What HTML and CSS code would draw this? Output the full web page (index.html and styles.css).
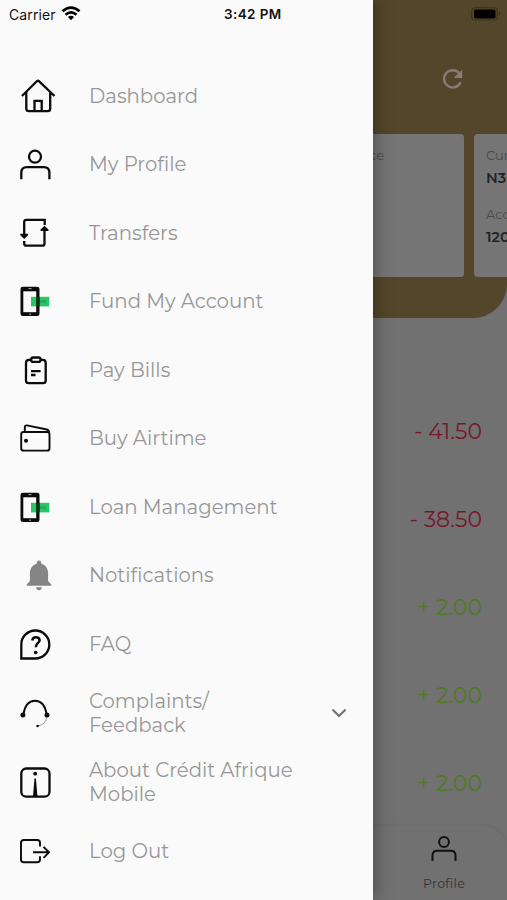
FILE: index.html
```html
<!DOCTYPE html>
<html lang="en">
<head>
<meta charset="utf-8">
<title>Mobile banking</title>
<link rel="stylesheet" href="styles.css">
</head>
<body>
<div class="screen">
  <main class="app">
    <header class="hero">
      <div class="toolbar">
        <svg class="refresh" width="24" height="24" viewBox="0 0 24 24"><path d="M19.6 15.200A8.600 8.600 0 1 1 18.400 6.400" fill="none" stroke="currentColor" stroke-width="2.400"/><path d="M21.200 2.500v8.500h-8.500z" fill="currentColor"/></svg>
      </div>
      <div class="cards">
        <section class="card card-main"><span class="label">Balance</span></section>
        <section class="card card-next">
          <span class="label">Cur</span><strong>N3</strong>
          <span class="label second">Acc</span><strong>120</strong>
        </section>
      </div>
    </header>
    <ul class="amounts">
      <li class="debit">- 41.50</li>
      <li class="debit">- 38.50</li>
      <li>+ 2.00</li>
      <li>+ 2.00</li>
      <li>+ 2.00</li>
    </ul>
    <nav class="tabs">
      <a class="tab">
        <svg width="28" height="28" viewBox="0 0 28 28" fill="none" stroke="#111" stroke-width="2"><circle cx="14" cy="7" r="4.900"/><path d="M2.500 26v-5.500q0-4.700 4.700-4.700h13.600q4.700 0 4.700 4.700V26"/></svg>
        <span>Profile</span>
      </a>
    </nav>
  </main>

  <aside class="drawer">
    <a class="item"><svg class="ic" viewBox="0 0 40 36"><path d="M4 18 18.800 3.300q1.200-1.100 2.400 0L36.500 18M8.300 14.500v16q0 2.700 2.700 2.700h18.500q2.700 0 2.700-2.700v-16M16.500 33V22.800h7.200V33"/></svg><span>Dashboard</span></a>
    <a class="item"><svg class="ic" viewBox="0 0 40 36"><circle cx="17" cy="10.700" r="6"/><path d="M3.300 33.200v-6.500q0-5.600 5.600-5.600h16.900q5.600 0 5.600 5.600v6.500"/></svg><span>My Profile</span></a>
    <a class="item"><svg class="ic" viewBox="0 0 40 36"><path d="M6.200 20V7q0-2.200 2.200-2.200h18.300V10M6.200 26v2.500q0 2.200 2.200 2.200h15.900q2.200 0 2.200-2.200V15"/><path class="solid" d="M2.400 18.800h7.600q.6.900-.2 1.700L6.200 24l-3.600-3.500q-.8-.8-.2-1.700zM22.700 16h7.700q.6-.9-.2-1.700l-3.700-3.500-3.700 3.500q-.7.800-.1 1.700z"/></svg><span>Transfers</span></a>
    <a class="item"><svg class="ic" viewBox="0 0 40 36"><path class="note" d="M13 13.800h18.300v9.600H13z"/><path class="noteline" d="M20 18.600h8"/><rect class="solid" x="2.500" y="3.700" width="19" height="29.300" rx="2.300"/><rect class="glass" x="5.300" y="8.300" width="12.900" height="20.900"/><path class="note" d="M13 13.800h5.200v9.600H13z"/><path class="shade" d="M18.200 13.800h3.300v9.600h-3.300z"/><path class="slot" d="M10.500 5.600h3M11 31.200h2"/></svg><span>Fund My Account</span></a>
    <a class="item"><svg class="ic" viewBox="0 0 40 36"><path d="M13 7.800h-2q-3 0-3 3v17.600q0 2.700 2.700 2.700H25q2.700 0 2.700-2.700V10.800q0-3-3-3h-2M13 19.200h9.600M13 23h4.500"/><rect x="13.200" y="5.500" width="9.300" height="4.400" rx="2"/></svg><span>Pay Bills</span></a>
    <a class="item"><svg class="ic mid" viewBox="0 0 40 36"><rect x="3.200" y="12" width="28.300" height="18.600" rx="2.400"/><path d="M6.800 11.700V7.200q.1-2.100 2.100-1.800l20 4.100q2 .4 2.200 3"/><circle class="solid" cx="8" cy="20.800" r="2"/></svg><span>Buy Airtime</span></a>
    <a class="item"><svg class="ic" viewBox="0 0 40 36"><path class="note" d="M13 13.800h18.300v9.600H13z"/><path class="noteline" d="M20 18.600h8"/><rect class="solid" x="2.500" y="3.700" width="19" height="29.300" rx="2.300"/><rect class="glass" x="5.300" y="8.300" width="12.900" height="20.900"/><path class="note" d="M13 13.800h5.200v9.600H13z"/><path class="shade" d="M18.200 13.800h3.300v9.600h-3.300z"/><path class="slot" d="M10.500 5.600h3M11 31.200h2"/></svg><span>Loan Management</span></a>
    <a class="item"><svg class="ic" viewBox="0 0 40 36"><path class="bell" d="M21 3.500c1.400 0 2.300 1 2.300 2.400v.8c4.300 1.200 6.800 5 6.800 9.300V24l3.200 3.400v1.400H8.700v-1.400L11.900 24v-8c0-4.300 2.500-8.100 6.800-9.300v-.8c0-1.400.9-2.400 2.300-2.400zM18 30.300h6q-.6 3-3 3t-3-3z"/></svg><span>Notifications</span></a>
    <a class="item"><svg class="ic" viewBox="0 0 40 36"><path d="M3.300 32.500V18.600a14 14 0 1 1 14 13.900z"/><path class="query" d="M14.300 14.500q.4-3.300 3.700-3.300t3.600 3q0 1.700-1.900 3.100-1.800 1.300-1.800 4"/><circle class="solid" cx="17.700" cy="26.500" r="1.800"/></svg><span>FAQ</span></a>
    <a class="item tall"><svg class="ic mid" viewBox="0 0 40 36"><path d="M5.500 19C7 10 10.500 5.700 17 5.700S27 10 28.600 19"/><path class="hair" d="M29 20.500q-.5 9-9 10.500"/><circle class="solid" cx="4.900" cy="20" r="2.500"/><circle class="solid" cx="29" cy="20" r="2.500"/><circle class="solid" cx="19.600" cy="31" r="1.300"/></svg><span>Complaints/<br>Feedback</span><svg class="chevron" width="16" height="10" viewBox="0 0 16 10"><path d="M1.500 1.500l6.500 6.500 6.500-6.500" fill="none" stroke="#737373" stroke-width="2.200"/></svg></a>
    <a class="item tall"><svg class="ic" viewBox="0 0 40 36"><rect x="3.300" y="4.500" width="28.200" height="28.200" rx="5"/><circle class="solid" cx="17.200" cy="9.700" r="1.900"/><path class="solid" d="M16.500 14.500h1.400l1.500 17.500h-4.400z"/></svg><span>About Crédit Afrique<br>Mobile</span></a>
    <a class="item"><svg class="ic mid" viewBox="0 0 40 36"><path d="M22 13.500v-3.700q0-2.800-2.800-2.800H5.800Q3 7 3 9.800v16.700q0 2.800 2.800 2.800h13.400q2.800 0 2.800-2.800v-3.300M15 19.300h15.500M25.500 13.800l5.500 5.500-5.500 5.500"/></svg><span>Log Out</span></a>
  </aside>

  <div class="status">
    <span class="carrier">Carrier</span>
    <svg class="wifi" width="20" height="15" viewBox="0 0 20 15"><path d="M1.500 5.300q8.500-7.200 17 0M4.500 8.700q5.500-4.500 11 0" fill="none" stroke="#000" stroke-width="2.700"/><path d="M10 14.200 6.900 11q3.100-2.500 6.200 0z"/></svg>
    <span class="time">3:42 PM</span>
    <svg class="battery" width="32" height="14" viewBox="0 0 32 14"><rect x=".7" y=".7" width="25.600" height="12.300" rx="3.500" fill="none" stroke="#3c331d" stroke-width="1.200"/><rect x="3" y="2.500" width="21.500" height="9" rx="1.800"/><path d="M28 4.500q3 2.300 0 4.600z" fill="#3c331d"/></svg>
  </div>
</div>
</body>
</html>
```

FILE: styles.css
```css
* { box-sizing: border-box; }
body { margin: 0; font-family: Montserrat, Inter, "Open Sans", sans-serif; }
.screen { position: relative; width: 507px; height: 900px; overflow: hidden; background: #717171; }

.app { display: flex; flex-direction: column; height: 900px; }
.hero { height: 318px; background: #54462b; border-bottom-right-radius: 34px; }
.toolbar { height: 134px; padding: 67px 42px 0 0; display: flex; justify-content: flex-end; }
.refresh { color: #877b78; }
.cards { display: flex; gap: 10px; overflow: hidden; }
.card { flex: none; height: 143px; background: #757575; border-radius: 4px; display: flex; flex-direction: column; white-space: nowrap; }
.card-main { width: 464px; padding: 13px 80px 0 0; align-items: flex-end; }
.card-next { width: 300px; padding: 13px 12px; color: #20242a; }
.label { font-size: 13px; line-height: 17px; color: #484b4d; }
.card strong { font-size: 14.500px; line-height: 18px; font-weight: 600; margin-top: 5px; }
.label.second { margin-top: 19px; }

.amounts { list-style: none; margin: 0; padding: 70px 25px 0 0; height: 508px; overflow: hidden; text-align: right; }
.amounts li { height: 88px; line-height: 88px; font-size: 22px; color: #51791f; }
.amounts li.debit { color: #77172b; }

.tabs { height: 74px; border-radius: 0 24px 0 0; background: #717171; box-shadow: 0 -1px 3px rgba(0,0,0,.06); display: flex; justify-content: flex-end; padding-right: 23px; }
.tab { width: 80px; padding-top: 9px; display: flex; flex-direction: column; align-items: center; font-size: 12.500px; line-height: 16px; letter-spacing: .3px; color: #333; }
.tab span { margin-top: 13px; }

.drawer { position: absolute; top: 0; left: 0; width: 372.500px; height: 900px; padding: 61.250px 0 0 18px; background: #fafafa; box-shadow: 0 0 18px rgba(0,0,0,.4); }
.item { display: flex; align-items: center; height: 68.500px; color: #979797; font-size: 19.700px; line-height: 24px; font-weight: 400; white-space: nowrap; }
.item.tall { height: 69.500px; }
.item span { margin-left: 31px; }
.ic { width: 40px; height: 36px; flex: none; fill: none; stroke: #0b0b0b; stroke-width: 2.300; }
.ic.mid { stroke-width: 1.900; }
.ic .solid { fill: #0b0b0b; stroke: none; }
.ic .glass { fill: #fafafa; stroke: none; }
.ic .note { fill: #27c768; stroke: none; }
.ic .shade { fill: #06351a; stroke: none; }
.ic .noteline { stroke: #1fae59; stroke-width: 3; }
.ic .slot { stroke: #aaa; stroke-width: 1; }
.ic .bell { fill: #858585; stroke: none; }
.ic .hair { stroke: #999; stroke-width: 1; }
.ic .query { stroke-width: 2.500; }
.chevron { margin-left: auto; margin-right: 26px; margin-top: 1px; }

.status { position: absolute; top: 0; left: 0; width: 507px; height: 28px; display: grid; grid-template-columns: 61px 31px 1fr 36px; align-items: center; font-family: Inter, sans-serif; color: #111; }
.carrier { padding-left: 9px; font-size: 14px; letter-spacing: .1px; }
.wifi { margin-top: -2px; }
.time { font-size: 13.500px; font-weight: 600; padding-left: 132px; letter-spacing: .4px; }
.battery { margin-top: -1px; }
```
